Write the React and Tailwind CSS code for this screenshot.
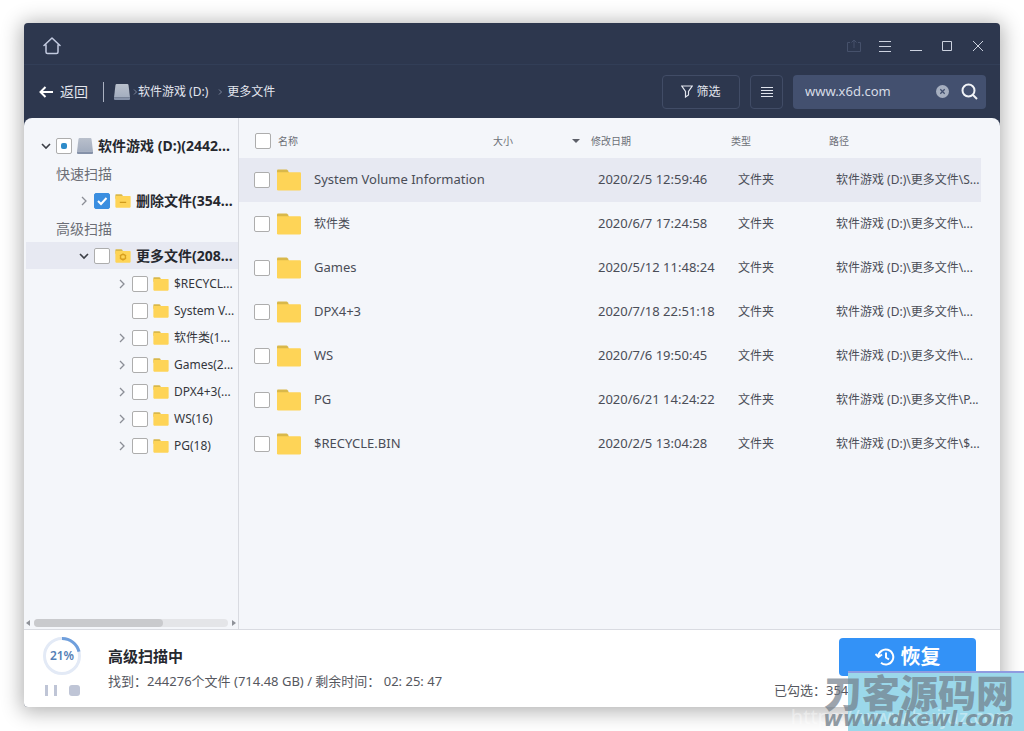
import React from "react";

const FOLDERS = [
  { name: "System Volume Information", date: "2020/2/5 12:59:46", path: "软件游戏 (D:)\\更多文件\\S...", active: true },
  { name: "软件类", date: "2020/6/7 17:24:58", path: "软件游戏 (D:)\\更多文件\\..." },
  { name: "Games", date: "2020/5/12 11:48:24", path: "软件游戏 (D:)\\更多文件\\..." },
  { name: "DPX4+3", date: "2020/7/18 22:51:18", path: "软件游戏 (D:)\\更多文件\\..." },
  { name: "WS", date: "2020/7/6 19:50:45", path: "软件游戏 (D:)\\更多文件\\..." },
  { name: "PG", date: "2020/6/21 14:24:22", path: "软件游戏 (D:)\\更多文件\\P..." },
  { name: "$RECYCLE.BIN", date: "2020/2/5 13:04:28", path: "软件游戏 (D:)\\更多文件\\$..." },
];

const CHILDREN = [
  { label: "$RECYCL...", open: true },
  { label: "System V...", open: false },
  { label: "软件类(1...", open: true },
  { label: "Games(2...", open: true },
  { label: "DPX4+3(...", open: true },
  { label: "WS(16)", open: true },
  { label: "PG(18)", open: true },
];

function Folder({ className, mark }) {
  return (
    <svg viewBox="0 0 24 22" className={className} aria-hidden="true">
      <path d="M1 0.5h8.5q.8 0 1.2.7L12 3.5v4H0v-6q0-1 1-1z" fill="#d9b84a" />
      <path d="M0 3.2h23q1 0 1 1v16q0 1.3-1.3 1.3H1.3Q0 21.500 0 20.200z" fill="#fed457" />
      {mark === "minus" && <path d="M7 13h10" stroke="#cf9a1d" strokeWidth="2" />}
      {mark === "gear" && (
        <g fill="none" stroke="#d9a01f" strokeWidth="2">
          <circle cx="12" cy="12.500" r="4" />
          <path d="M12 7v3M12 15v3M7 10l2 1M15 14l2 1M17 10l-2 1M9 14l-2 1" />
        </g>
      )}
    </svg>
  );
}

function Drive({ className }) {
  return (
    <svg viewBox="0 0 16 16" className={className} aria-hidden="true">
      <defs>
        <linearGradient id="drive" x1="0" y1="0" x2="0" y2="1">
          <stop offset="0" stopColor="#b9c0cc" />
          <stop offset="1" stopColor="#a3adbf" />
        </linearGradient>
      </defs>
      <path d="M2.500 0h11q.8 0 1 1L16 13.500H0L1.500 1q.2-1 1-1z" fill="url(#drive)" />
      <path d="M0 13.500h16V15q0 1-1 1H1q-1 0-1-1z" fill="#8591a8" />
    </svg>
  );
}

function Check({ label, state }) {
  return (
    <span className="relative flex size-4 shrink-0">
      <input
        type="checkbox"
        aria-label={label}
        defaultChecked={state === "on"}
        className="size-4 appearance-none rounded-xs border border-[#adadad] bg-white checked:border-[#3a8ee0] checked:bg-[#3a8ee0]"
      />
      {state === "on" && (
        <svg viewBox="0 0 16 16" className="pointer-events-none absolute inset-0 size-4">
          <path d="M4 8l3 3 5.500-6" fill="none" stroke="#fff" strokeWidth="2" />
        </svg>
      )}
      {state === "part" && <span className="pointer-events-none absolute inset-[5px] rounded-xs bg-[#2e8bc9]" />}
    </span>
  );
}

function Chevron({ down, label }) {
  return (
    <button type="button" aria-label={label} className="flex size-3 shrink-0 items-center justify-center">
      <svg viewBox="0 0 12 12" className="size-3" fill="none">
        {down ? (
          <path d="M2 4l4 4 4-4" stroke="#3c3f46" strokeWidth="1.600" />
        ) : (
          <path d="M4 2l4 4-4 4" stroke="#8b8e96" strokeWidth="1.300" />
        )}
      </svg>
    </button>
  );
}

function TitleBar() {
  return (
    <div className="flex h-[42px] items-center justify-between border-b border-[#323e57] pr-3.5 pl-[19px]">
      <button type="button" aria-label="主页" className="mt-1 text-[#c3cbe0]">
        <svg viewBox="0 0 18 18" className="size-[18px]" fill="none" stroke="currentColor" strokeWidth="1.500" strokeLinejoin="round" strokeLinecap="round">
          <path d="M1 8.500L9 1l8 7.500M3 7.500v7.500q0 1.500 1.500 1.500h9q1.500 0 1.500-1.500V7.500" />
        </svg>
      </button>
      <div className="mt-1 flex items-center gap-[15px] text-[#ccd2df]">
        <button type="button" aria-label="导出" className="text-[#46516b]">
          <svg viewBox="0 0 16 16" className="size-4" fill="none" stroke="currentColor">
            <path d="M4 4.500H1.500v9h13v-9H12M8 10V2M5.500 4.500L8 2l2.500 2.500" />
          </svg>
        </button>
        <button type="button" aria-label="菜单">
          <svg viewBox="0 0 16 16" className="size-4" fill="none" stroke="currentColor">
            <path d="M2 3.500h12M2 8.500h12M2 13.500h12" />
          </svg>
        </button>
        <button type="button" aria-label="最小化">
          <svg viewBox="0 0 16 16" className="size-4" fill="none" stroke="currentColor">
            <path d="M2 12.500h12" />
          </svg>
        </button>
        <button type="button" aria-label="最大化">
          <svg viewBox="0 0 16 16" className="size-4" fill="none" stroke="currentColor">
            <path d="M3.500 3.500h9v9h-9z" />
          </svg>
        </button>
        <button type="button" aria-label="关闭">
          <svg viewBox="0 0 16 16" className="size-4" fill="none" stroke="currentColor">
            <path d="M3 3l10 10M13 3L3 13" />
          </svg>
        </button>
      </div>
    </div>
  );
}

function Toolbar() {
  return (
    <div className="flex h-[53px] items-center justify-between pr-[14px] pl-[15px] text-white">
      <div className="flex items-center">
        <button type="button" className="flex items-center gap-[7px] text-sm text-[#e3e6ee]">
          <svg viewBox="0 0 14 12" className="h-3 w-3.5" fill="none" stroke="#fff" strokeWidth="2">
            <path d="M14 6H1.500M6.500 1l-5 5 5 5" />
          </svg>
          返回
        </button>
        <span className="mr-2.5 ml-[15px] h-5 w-px bg-[#aab1c1]" />
        <nav aria-label="路径" className="flex items-center text-xs text-[#e3e6ee]">
          <Drive className="mr-[3px] h-4 w-4" />
          <Crumb />
          <a href="#drive">软件游戏 (D:)</a>
          <span className="ml-2.5" />
          <Crumb />
          <a href="#more" className="ml-1">更多文件</a>
        </nav>
      </div>
      <div className="flex items-center gap-2.5">
        <button type="button" className="flex h-[34px] w-[78px] items-center justify-center gap-[3px] rounded-sm border border-[#414c66] text-xs text-[#e3e6ee]">
          <svg viewBox="0 0 12 13" className="h-[13px] w-3" fill="none" stroke="currentColor" strokeWidth="1.200">
            <path d="M.8 1h10.400L7.500 6.500V10L4.500 12V6.500z" />
          </svg>
          筛选
        </button>
        <button type="button" aria-label="列表" className="flex h-[34px] w-[33px] items-center justify-center rounded-sm border border-[#414c66]">
          <svg viewBox="0 0 12 12" className="size-3" stroke="#dfe3ec" fill="none">
            <path d="M0 1.500h12M0 4.500h12M0 7.500h12M0 10.500h12" />
          </svg>
        </button>
        <div className="flex h-[34px] w-[193px] items-center rounded-sm bg-[#43506f] pr-2 pl-3">
          <input
            type="text"
            aria-label="搜索"
            defaultValue="www.x6d.com"
            className="min-w-0 flex-1 bg-transparent text-[13px] text-[#d7dce6] outline-none"
          />
          <button type="button" aria-label="清除" className="mr-3">
            <svg viewBox="0 0 13 13" className="size-[13px]">
              <circle cx="6.500" cy="6.500" r="6.500" fill="#a6afc0" />
              <path d="M4.300 4.300l4.400 4.400M8.700 4.300L4.300 8.700" stroke="#43506f" strokeWidth="1.300" />
            </svg>
          </button>
          <button type="button" aria-label="查找">
            <svg viewBox="0 0 17 17" className="size-[17px]" fill="none" stroke="#f1f3f7" strokeWidth="2">
              <circle cx="7.500" cy="7.500" r="6" />
              <path d="M12 12l4 4" />
            </svg>
          </button>
        </div>
      </div>
    </div>
  );
}

function Crumb() {
  return (
    <svg viewBox="0 0 5 6" className="h-1.5 w-[5px]" fill="none" stroke="#7d879d">
      <path d="M1 0.500l2.500 2.500L1 5.500" />
    </svg>
  );
}

function Sidebar() {
  return (
    <aside className="flex w-[215px] shrink-0 flex-col justify-between border-r border-[#d9dbe1] text-xs text-[#34363c]">
      <ul className="flex flex-col gap-px pt-3.5 pl-0.5 whitespace-nowrap">
        <li className="flex h-[27px] items-center pl-3.5">
          <Chevron down label="折叠磁盘" />
          <span className="ml-1 flex items-center">
            <Check label="软件游戏 (D:)" state="part" />
            <Drive className="mx-[5px] h-4 w-4" />
            <b className="text-sm text-[#26282e]">软件游戏 (D:)(2442...</b>
          </span>
        </li>
        <li>
          <p className="h-[27px] pl-[30px] text-sm/[27px] text-[#6c6e76]">快速扫描</p>
          <div className="flex h-[27px] items-center pl-[52px]">
            <Chevron label="展开删除文件" />
            <span className="ml-1 flex items-center">
              <Check label="删除文件" state="on" />
              <Folder mark="minus" className="mx-[5px] h-[14px] w-4" />
              <b className="text-sm text-[#26282e]">删除文件(354...</b>
            </span>
          </div>
        </li>
        <li>
          <p className="h-[27px] pl-[30px] text-sm/[27px] text-[#6c6e76]">高级扫描</p>
          <div className="flex h-[27px] items-center bg-[#e7e9f2] pl-[52px]">
            <Chevron down label="折叠更多文件" />
            <span className="ml-1 flex items-center">
              <Check label="更多文件" />
              <Folder mark="gear" className="mx-[5px] h-[14px] w-4" />
              <b className="text-sm text-[#26282e]">更多文件(208...</b>
            </span>
          </div>
        </li>
        <li>
          <ul>
            {CHILDREN.map((c) => (
              <li key={c.label} className="flex h-[27px] items-center pl-[90px]">
                {c.open ? <Chevron label={"展开" + c.label} /> : <span className="w-3" />}
                <span className="ml-1 flex items-center">
                  <Check label={c.label} />
                  <Folder className="mx-[5px] h-[14px] w-4" />
                  {c.label}
                </span>
              </li>
            ))}
          </ul>
        </li>
      </ul>
      <div className="flex h-3 items-center gap-1 px-0.5">
        <svg viewBox="0 0 4 6" className="h-1.5 w-1" fill="#8f9299"><path d="M4 0v6L0 3z" /></svg>
        <span className="flex h-2 flex-1 rounded-full bg-[#e4e5e8]">
          <span className="w-2/3 rounded-full bg-[#c9cacd]" />
        </span>
        <svg viewBox="0 0 4 6" className="h-1.5 w-1" fill="#8f9299"><path d="M0 0v6l4-3z" /></svg>
      </div>
    </aside>
  );
}

function FileTable() {
  return (
    <main className="min-w-0 flex-1 pr-[19px]">
      <table className="w-full table-fixed border-collapse text-left whitespace-nowrap">
        <colgroup>
          <col />
          <col className="w-[98px]" />
          <col className="w-[140px]" />
          <col className="w-[98px]" />
          <col className="w-[159px]" />
        </colgroup>
        <thead className="text-[10px] text-[#6c6f77]">
          <tr className="h-10">
            <th className="pt-1.5 pl-4 font-normal">
              <span className="flex items-center gap-[7px]">
                <Check label="全选" />
                名称
              </span>
            </th>
            <th className="pt-1.5 pl-[7px] font-normal">
              <span className="flex items-center justify-between pr-1">
                大小
                <svg viewBox="0 0 8 4" className="h-1 w-2" fill="#5c5f68"><path d="M0 0h8L4 4z" /></svg>
              </span>
            </th>
            <th className="pt-1.5 pl-[7px] font-normal">修改日期</th>
            <th className="pt-1.5 pl-[7px] font-normal">类型</th>
            <th className="pt-1.5 pl-[7px] font-normal">路径</th>
          </tr>
        </thead>
        <tbody className="text-xs text-[#4a4d57]">
          {FOLDERS.map((f) => (
            <tr key={f.name} className={f.active ? "h-11 bg-[#e7e9f2]" : "h-11"}>
              <td className="pl-[15px]">
                <span className="flex items-center">
                  <Check label={f.name} />
                  <Folder className="mr-[13px] ml-[7px] h-[22px] w-6" />
                  <span className={/^[\x00-\x7f]+$/.test(f.name) ? "text-[13px]" : "text-xs"}>{f.name}</span>
                </span>
              </td>
              <td />
              <td className="pl-[14px] text-[13px]">{f.date}</td>
              <td className="pl-[14px]">文件夹</td>
              <td className="pl-[14px]">{f.path}</td>
            </tr>
          ))}
        </tbody>
      </table>
    </main>
  );
}

function Footer() {
  return (
    <footer className="flex h-[78px] justify-between border-t border-[#d9dbe1] bg-white pr-6 pl-[18px]">
      <div className="flex">
        <div className="flex w-10 flex-col items-center pt-[7px]">
          <div className="relative flex size-[38px] items-center justify-center">
            <svg viewBox="0 0 38 38" className="absolute inset-0 size-[38px]" fill="none" strokeWidth="3">
              <circle cx="19" cy="19" r="17.500" stroke="#e3eaf6" />
              <path d="M19 1.500A17.500 17.500 0 0 1 36 14.600" stroke="#6f9fdc" />
            </svg>
            <span className="relative text-xs font-semibold text-[#5580b5]">21%</span>
          </div>
          <div className="mt-2.5 flex items-center gap-3">
            <button type="button" aria-label="暂停" className="flex gap-1.5">
              <span className="h-[11px] w-[3px] bg-[#bfc5d6]" />
              <span className="h-[11px] w-[3px] bg-[#bfc5d6]" />
            </button>
            <button type="button" aria-label="停止" className="size-[11px] rounded-[3px] bg-[#bfc5d6]" />
          </div>
        </div>
        <div className="ml-[26px] flex flex-col gap-[5px] pt-4">
          <h1 className="text-[15px]/5 font-bold text-[#26282e]">高级扫描中</h1>
          <p className="text-[13px]/5 whitespace-pre text-[#55575e]">找到：244276个文件 (714.48 GB) / 剩余时间： 02: 25: 47</p>
        </div>
      </div>
      <div className="flex flex-col items-end gap-1 pt-2">
        <button type="button" className="flex h-[38px] w-[137px] items-center justify-center gap-1.5 rounded-sm bg-[#3392f7] text-xl font-bold text-white">
          <svg viewBox="0 0 20 18" className="h-[18px] w-5" fill="none" stroke="currentColor" strokeWidth="2">
            <path d="M3.300 8.500A7.500 7.500 0 1 1 6 14.800M0.500 6l3 3 3.500-2.500M11 4.500V9.500l3 2" />
          </svg>
          恢复
        </button>
        <p className="w-[202px] text-[13px]/5 text-[#55575e]">已勾选：354</p>
      </div>
    </footer>
  );
}

function Watermark() {
  return (
    <div className="pointer-events-none absolute right-0 bottom-0 h-[60px] w-[176px] border-t-2 border-[#8f9be0] bg-[#9bd8ea] whitespace-nowrap">
      <span className="absolute right-2.5 bottom-0.5 text-xl/6 text-white/40">https://www.huijuz.com</span>
      <span className="absolute right-2.5 bottom-5 font-['Noto_Sans_CJK_SC',sans-serif] text-[38px]/[40px] font-black text-[#707c88]/70">刀客源码网</span>
      <span className="absolute right-2.5 bottom-0 font-['DejaVu_Sans',sans-serif] text-[21px]/6 font-bold text-[#6f7c87]/75 italic">www.dkewl.com</span>
    </div>
  );
}

export default function App() {
  return (
    <div className="relative flex min-h-screen flex-col overflow-hidden bg-white px-6 pt-[23px] pb-6 font-['Noto_Sans','Noto_Sans_CJK_SC',sans-serif]">
      <div className="flex flex-1 flex-col overflow-hidden rounded-sm bg-[#2d374e] shadow-[0_2px_20px_3px_rgba(0,0,0,0.3)]">
        <TitleBar />
        <Toolbar />
        <div className="flex flex-1 overflow-hidden rounded-t-lg bg-[#f4f6fa]">
          <Sidebar />
          <FileTable />
        </div>
        <Footer />
      </div>
      <Watermark />
    </div>
  );
}
